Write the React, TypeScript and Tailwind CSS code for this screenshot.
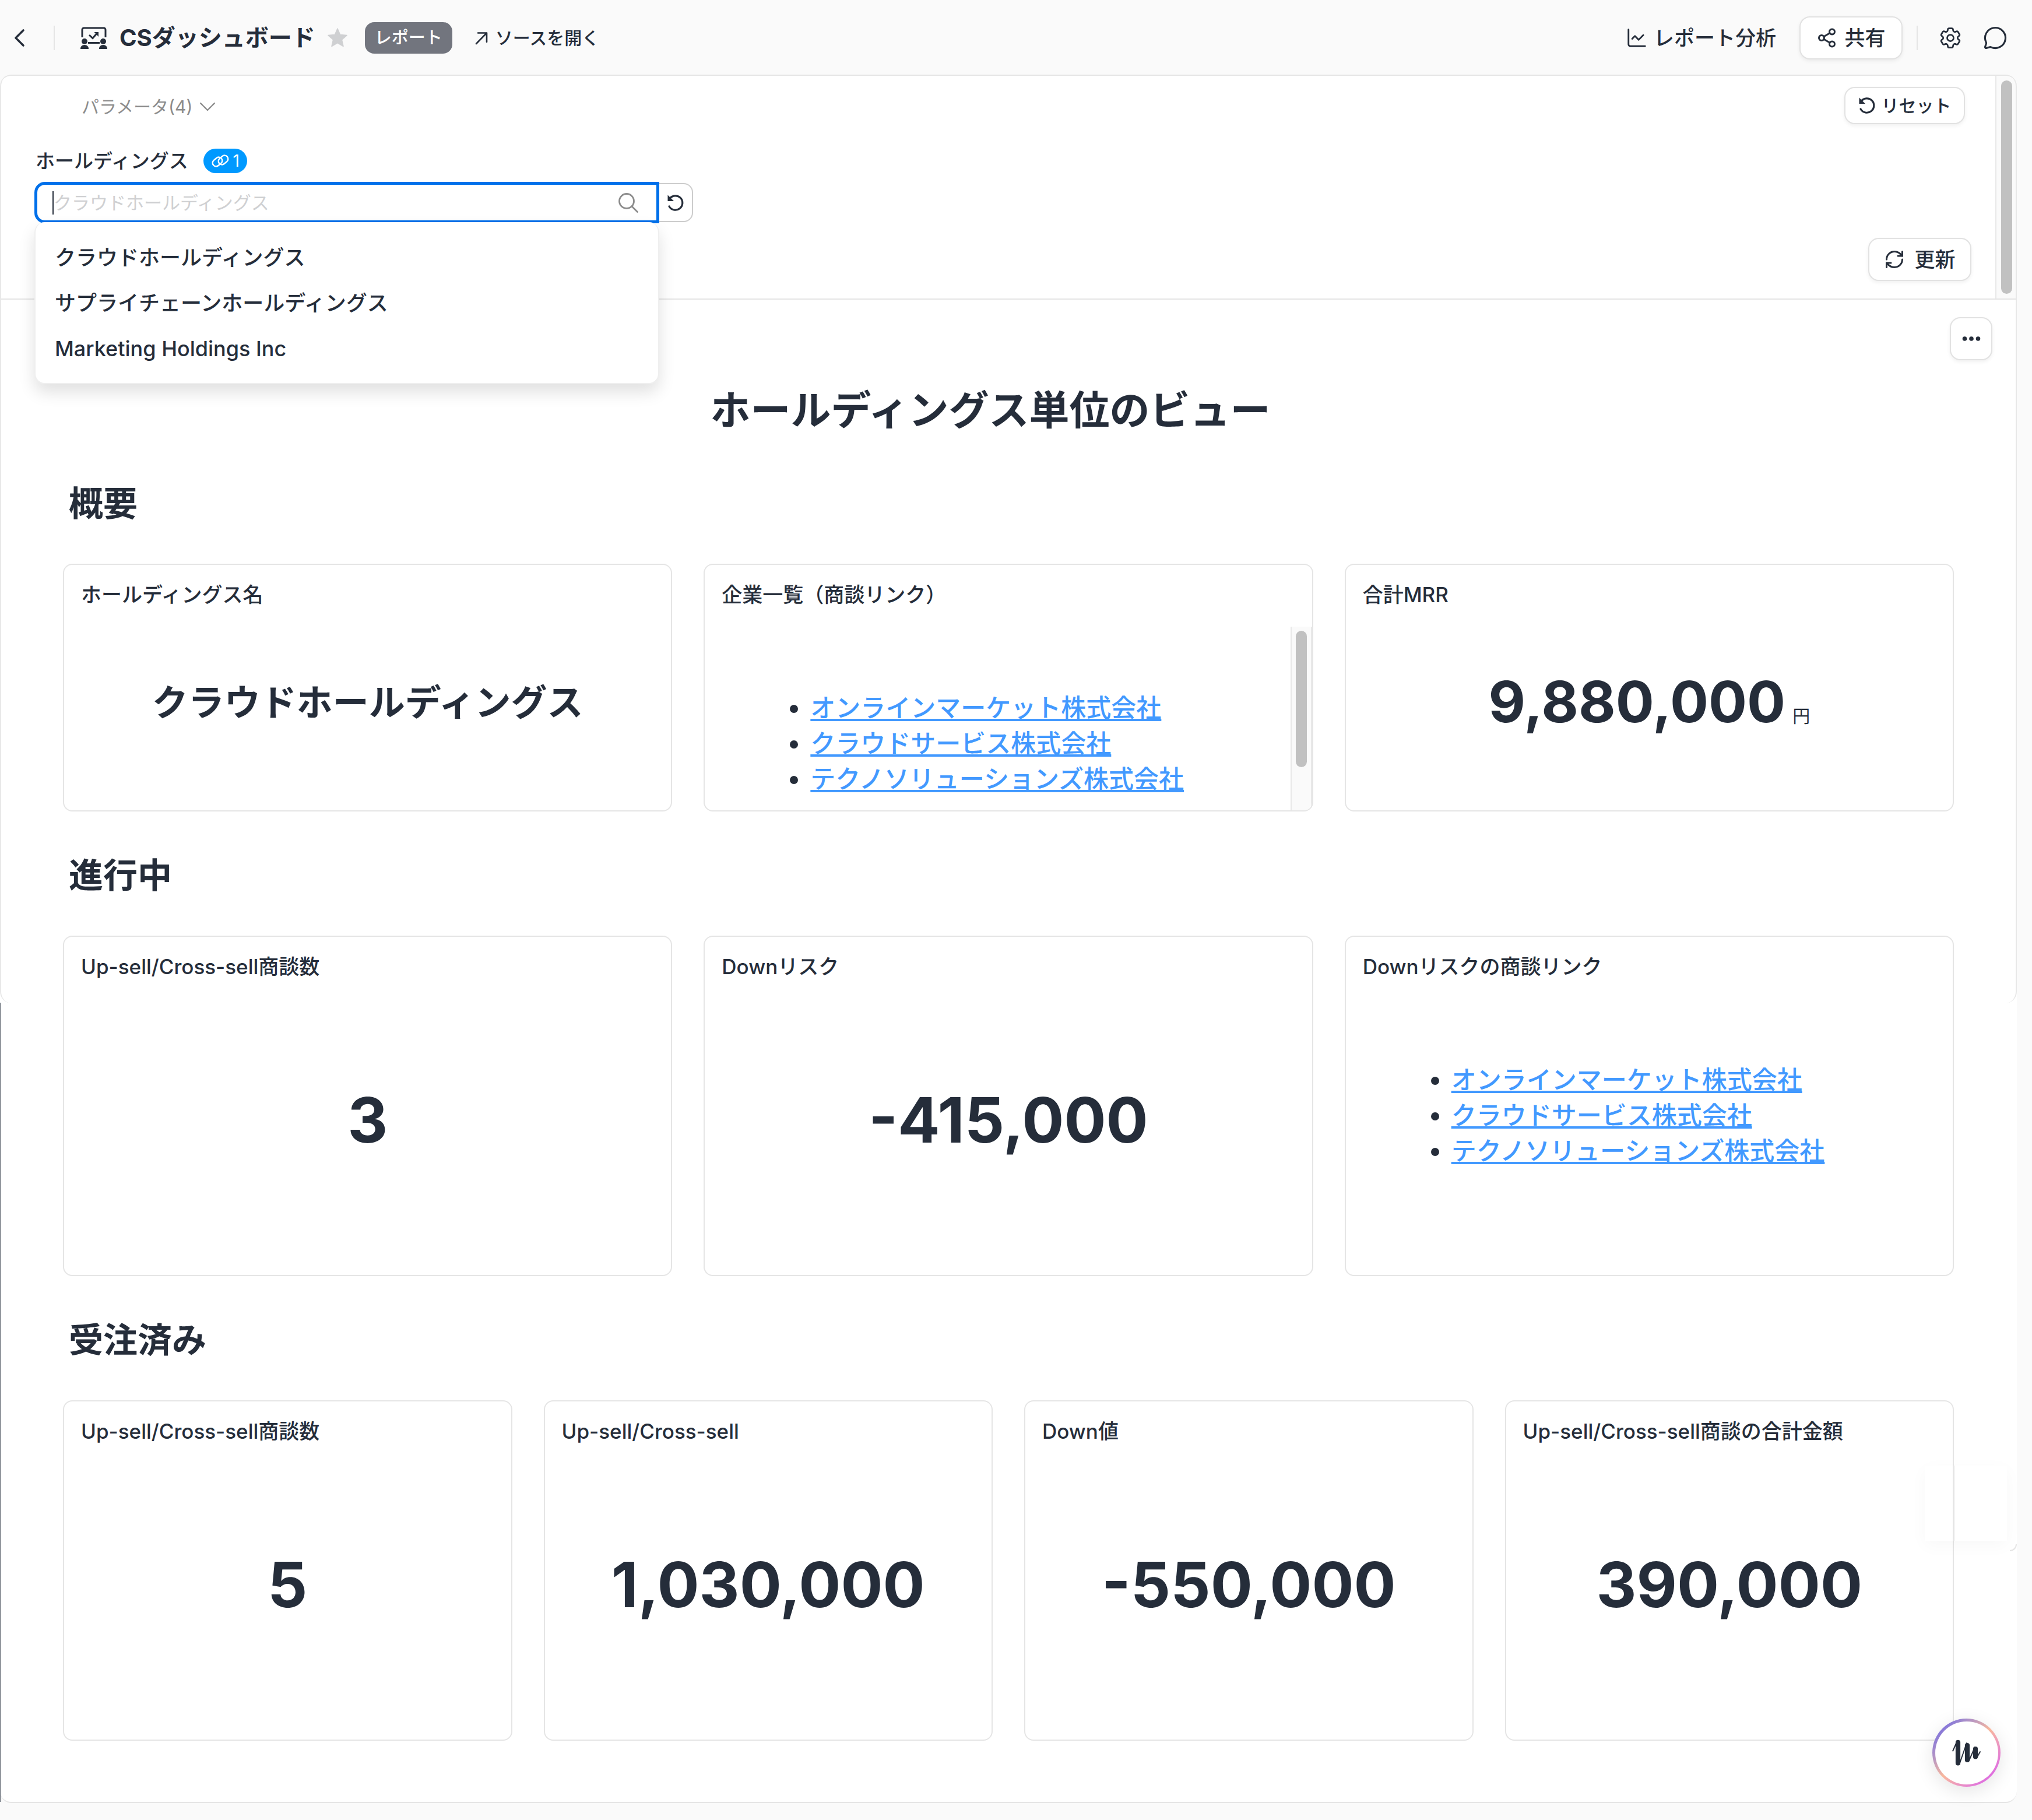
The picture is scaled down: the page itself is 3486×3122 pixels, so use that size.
import React from 'react';
import { ChartLine, MessageCircle, RefreshCw, Share2 } from 'lucide-react';
import { HiOutlineCog6Tooth } from 'react-icons/hi2';

const HOLDINGS = ['クラウドホールディングス', 'サプライチェーンホールディングス', 'Marketing Holdings Inc'];
const COMPANIES = ['オンラインマーケット株式会社', 'クラウドサービス株式会社', 'テクノソリューションズ株式会社'];

const BackIcon = () => (
  <svg viewBox="0 0 32 40" className="w-8 h-10" fill="none" stroke="currentColor" strokeWidth="3.6" strokeLinecap="round" strokeLinejoin="round">
    <path d="M22 7L9 20l13 13" />
  </svg>
);

const BoardIcon = () => (
  <svg viewBox="0 0 48 38" className="w-[48px] h-[38px] shrink-0" fill="none" stroke="currentColor">
    <path d="M4 18V5a3 3 0 0 1 3-3h34a3 3 0 0 1 3 3v13" strokeWidth="3" />
    <path d="M14 27.5h20" strokeWidth="3" />
    <path d="M16 14l6 5.5 7-8" strokeWidth="3" />
    <path d="M24.500 9h7.500v8z" fill="currentColor" stroke="none" />
    <g fill="currentColor" stroke="none">
      <circle cx="8" cy="25" r="5" />
      <circle cx="40" cy="25" r="5" />
      <path d="M1 37.500c0-3.500 2.500-6.500 7-6.500s7 3 7 6.500c0 .8-.5 1-1 1H2c-.5 0-1-.2-1-1z" />
      <path d="M33 37.500c0-3.500 2.500-6.500 7-6.500s7 3 7 6.500c0 .8-.5 1-1 1H34c-.5 0-1-.2-1-1z" />
    </g>
  </svg>
);

const StarIcon = () => (
  <svg viewBox="0 0 36 36" className="w-9 h-9" fill="currentColor" stroke="currentColor" strokeWidth="1.500" strokeLinejoin="round">
    <path d="M18 2l4.600 10.600 11.400 1-8.600 7.600 2.600 11.300L18 26.500 8 32.500l2.600-11.300L2 13.600l11.400-1z" />
  </svg>
);

const OpenIcon = () => (
  <svg viewBox="0 0 24 24" className="w-6 h-6" fill="none" stroke="currentColor" strokeWidth="2.600" strokeLinecap="round" strokeLinejoin="round">
    <path d="M6 3.500h15V19M21 3.500L3 22" />
  </svg>
);

const DownIcon = () => (
  <svg viewBox="0 0 28 18" className="w-7 h-[18px]" fill="none" stroke="currentColor" strokeWidth="2.400" strokeLinecap="round" strokeLinejoin="round">
    <path d="M2 3l12 12L26 3" />
  </svg>
);

const SearchIcon = () => (
  <svg viewBox="0 0 36 36" className="w-9 h-9 text-[#8c8c8c]" fill="none" stroke="currentColor" strokeWidth="2.800" strokeLinecap="round">
    <circle cx="15" cy="15" r="12.500" />
    <path d="M24 24l9.500 9.500" />
  </svg>
);

const ResetIcon = () => (
  <svg viewBox="0 0 30 30" className="w-[30px] h-[30px] shrink-0" fill="none">
    <path d="M5 7.500A12.200 12.200 0 1 1 4 21" stroke="currentColor" strokeWidth="3.200" strokeLinecap="round" />
    <path d="M1.500 1.500v10.500h10.500z" fill="currentColor" />
  </svg>
);

const LinkIcon = () => (
  <svg viewBox="0 0 32 24" className="w-8 h-6" fill="none" stroke="currentColor" strokeWidth="2.400">
    <rect x="2" y="7.500" width="18" height="12" rx="6" transform="rotate(-40 11 13.500)" />
    <rect x="12" y="4.500" width="18" height="12" rx="6" transform="rotate(-40 21 10.500)" />
  </svg>
);

interface PillButtonProps {
  className?: string;
  label?: string;
  children: React.ReactNode;
}

const PillButton: React.FC<PillButtonProps> = ({ className = '', label, children }) => (
  <button
    type="button"
    aria-label={label}
    className={`flex items-center justify-center bg-white border-2 border-[#e2e2e2] rounded-[18px] font-medium whitespace-nowrap shadow-[0_3px_6px_rgba(0,0,0,0.06)] ${className}`}
  >
    {children}
  </button>
);

const Header = () => (
  <header className="flex items-center justify-between h-32 pt-0.5 pl-[18px] pr-[42px]">
    <div className="flex items-center">
      <button type="button" aria-label="戻る">
        <BackIcon />
      </button>
      <span className="w-0.5 h-[42px] bg-[#e5e5e5] ml-[42px] mr-[43px]"></span>
      <BoardIcon />
      <h1 className="text-[40px] leading-[56px] font-bold ml-5">CSダッシュボード</h1>
      <button type="button" aria-label="お気に入り" className="text-[#cfd0d2] ml-5">
        <StarIcon />
      </button>
      <span className="flex items-center justify-center w-[150px] h-[54px] rounded-2xl bg-[#72757e] text-white text-[29px] font-medium ml-[29px]">
        レポート
      </span>
      <a href="#source" className="flex items-center gap-3 text-[30px] font-medium ml-[38px]">
        <OpenIcon />
        ソースを開く
      </a>
    </div>
    <div className="flex items-center">
      <a href="#analysis" className="flex items-center gap-2.5 text-[35px] font-medium mr-10">
        <ChartLine size={38} strokeWidth={1.8} />
        レポート分析
      </a>
      <PillButton className="w-[177px] h-[74px] gap-3 text-[35px]">
        <Share2 size={36} strokeWidth={2} />
        共有
      </PillButton>
      <span className="w-0.5 h-[42px] bg-[#e5e5e5] ml-6 mr-[34px]"></span>
      <button type="button" aria-label="設定">
        <HiOutlineCog6Tooth size={44} />
      </button>
      <button type="button" aria-label="コメント" className="ml-[34px]">
        <MessageCircle size={42} strokeWidth={1.8} />
      </button>
    </div>
  </header>
);

const HoldingSelect = () => (
  <div className="flex items-center">
    <div className="relative w-[1072px]">
      <div className="flex items-center h-[71px] bg-white border-[5px] border-[#0070ea] rounded-l-[18px] pl-[26px] pr-[30px]">
        <span className="w-0.5 h-10 bg-[#252d3a]"></span>
        <input
          id="holding"
          type="text"
          placeholder="クラウドホールディングス"
          className="flex-1 text-[31px] leading-[48px] outline-none placeholder:text-[#cfd0d2]"
        />
        <SearchIcon />
      </div>
      <ul className="absolute left-0 top-[69px] z-10 w-full h-[278px] pt-[22px] bg-white rounded-[18px] border-2 border-t-0 border-[#efefef] shadow-[0_14px_28px_rgba(0,0,0,0.12)]">
        {HOLDINGS.map((name) => (
          <li key={name} className="h-[78px] px-[33px] text-[36px] leading-[78px] font-medium">
            {name}
          </li>
        ))}
      </ul>
    </div>
    <button
      type="button"
      aria-label="パラメータをリセット"
      className="flex items-center justify-center w-[58px] h-[67px] bg-white border-2 border-l-0 border-[#cccccc] rounded-r-2xl"
    >
      <ResetIcon />
    </button>
  </div>
);

const Parameters = () => (
  <section className="flex border-b-2 border-[#e5e5e5]">
    <div className="flex-1 pt-[19px] pb-[30px]">
      <div className="flex items-center justify-between pl-[140px] pr-[52px]">
        <button type="button" className="flex items-center gap-3 pt-1 text-[30px] text-[#8c8c8c]">
          パラメータ(4)
          <DownIcon />
        </button>
        <PillButton className="w-[207px] h-16 gap-2.5 text-[30px]">
          <ResetIcon />
          リセット
        </PillButton>
      </div>
      <div className="pl-[59px] mt-[42px]">
        <div className="flex items-center gap-[26px] pl-0.5 mb-[15px]">
          <label htmlFor="holding" className="text-[33px] leading-[42px] font-medium">
            ホールディングス
          </label>
          <span className="flex items-center justify-center gap-1.5 w-[75px] h-[42px] rounded-full bg-[#0099ff] text-white text-[28px]">
            <LinkIcon />1
          </span>
        </div>
        <HoldingSelect />
      </div>
      <div className="flex justify-end mt-[25px] pr-[41px]">
        <PillButton className="w-[177px] h-[74px] gap-4 text-[35px]">
          <RefreshCw size={36} strokeWidth={2} />
          更新
        </PillButton>
      </div>
    </div>
    <div className="w-[37px] pt-2 pb-2 bg-[#fafafa] border-l-2 border-[#e8e8e8] rounded-tr-[20px]">
      <div className="w-[19px] h-full mx-auto rounded-full bg-[#c1c1c1]"></div>
    </div>
  </section>
);

interface CardProps {
  title: string;
  tall?: boolean;
  children: React.ReactNode;
}

const Card: React.FC<CardProps> = ({ title, tall, children }) => (
  <article
    className={`flex flex-col border-2 border-[#e5e5e5] rounded-2xl bg-white overflow-hidden ${tall ? 'h-[584px]' : 'h-[425px]'}`}
  >
    <h3 className="px-[29px] pt-[25px] h-[106px] shrink-0 text-[35px] leading-[52px] font-medium">{title}</h3>
    {children}
  </article>
);

const Value = ({ value }: { value: string }) => (
  <div className="flex-1 flex items-center justify-center pb-[58px]">
    <p className="text-[107px] leading-[120px] font-bold">{value}</p>
  </div>
);

const CompanyLinks = () => (
  <ul className="list-disc pl-[181px] text-[43px] leading-[61px] font-medium">
    {COMPANIES.map((name) => (
      <li key={name}>
        <a href="#company" className="text-[#4299ff] underline">
          {name}
        </a>
      </li>
    ))}
  </ul>
);

const SectionTitle = ({ children }: { children: React.ReactNode }) => (
  <h2 className="pl-[10px] pt-[66px] pb-[59px] text-[59px] leading-[88px] font-bold">{children}</h2>
);

const AssistantButton = () => (
  <button
    type="button"
    aria-label="アシスタント"
    className="absolute right-[28px] bottom-[26px] flex items-center justify-center w-[117px] h-[117px] rounded-full bg-linear-135 from-[#5f50ea] via-[#f9b79b] to-[#d540f5] shadow-[0_8px_32px_rgba(0,0,0,0.10)]"
  >
    <span className="flex items-center justify-center w-[108px] h-[108px] rounded-full bg-white">
      <svg viewBox="0 0 49 45" className="w-[49px] h-[45px]" fill="none" stroke="currentColor" strokeLinecap="round" strokeLinejoin="round">
        <path d="M1.200 19.500L8 4M12.500 42L25 6M29 36L39 13M42 31.500l6-10.500" strokeWidth="1.900" />
        <path d="M10 4.800v35.700" strokeWidth="8.200" />
        <path d="M26 10v25" strokeWidth="8.200" />
        <path d="M40 16v13.500" strokeWidth="8.200" />
      </svg>
    </span>
  </button>
);

export default function App() {
  return (
    <div
      className="bg-[#fafafa] text-[#252d3a] font-['Inter','Noto_Sans_CJK_JP',sans-serif] [font-variation-settings:'opsz'_14] pb-[29px]"
      lang="ja"
    >
      <Header />
      <main className="relative mr-[26px] bg-white border-y-2 border-[#e5e5e5] rounded-[20px]">
        {/* side edges */}
        <div className="absolute inset-x-0 -top-0.5 h-[1593px] border-x-2 border-[#e8e8e8] rounded-[20px] pointer-events-none"></div>
        <div className="absolute left-0 top-[1590px] bottom-0 w-px bg-[#5b626d]"></div>
        <div className="absolute right-0 top-[2519px] w-3 h-3 border-b-2 border-r-2 border-[#e5e5e5] rounded-br-xl"></div>

        <Parameters />

        <section className="pt-[30px] pb-[105px]">
          <div className="flex justify-end pr-[42px]">
            <PillButton label="メニュー" className="w-[73px] h-[74px]">
              <svg viewBox="0 0 32 8" className="w-8 h-2" fill="currentColor">
                <circle cx="4.500" cy="4" r="3.800" />
                <circle cx="16" cy="4" r="3.800" />
                <circle cx="27.500" cy="4" r="3.800" />
              </svg>
            </PillButton>
          </div>
          <div className="px-[108px]">
            <h1 className="mt-[36px] pr-[62px] text-center text-[69px] leading-[100px] font-bold">ホールディングス単位のビュー</h1>

            <SectionTitle>概要</SectionTitle>
            <div className="grid grid-cols-3 gap-[54px]">
              <Card title="ホールディングス名">
                <div className="flex-1 flex items-center justify-center pb-[54px]">
                  <p className="text-[62px] leading-[88px] font-bold">クラウドホールディングス</p>
                </div>
              </Card>
              <Card title="企業一覧（商談リンク）">
                <div className="flex-1 flex justify-between">
                  <div className="pt-[109px]">
                    <CompanyLinks />
                  </div>
                  <div className="w-[37px] pt-[7px] bg-[#fafafa] border-x-2 border-[#e8e8e8]">
                    <div className="w-[19px] h-[234px] mx-auto rounded-full bg-[#c1c1c1]"></div>
                  </div>
                </div>
              </Card>
              <Card title="合計MRR">
                <div className="flex-1 flex items-baseline justify-center gap-3 pt-[69px]">
                  <p className="text-[98px] leading-[120px] font-bold">9,880,000</p>
                  <span className="text-[30px]">円</span>
                </div>
              </Card>
            </div>

            <SectionTitle>進行中</SectionTitle>
            <div className="grid grid-cols-3 gap-[54px]">
              <Card title="Up-sell/Cross-sell商談数" tall>
                <Value value="3" />
              </Card>
              <Card title="Downリスク" tall>
                <Value value="-415,000" />
              </Card>
              <Card title="Downリスクの商談リンク" tall>
                <div className="pt-[109px]">
                  <CompanyLinks />
                </div>
              </Card>
            </div>

            <SectionTitle>受注済み</SectionTitle>
            <div className="grid grid-cols-4 gap-[54px]">
              <Card title="Up-sell/Cross-sell商談数" tall>
                <Value value="5" />
              </Card>
              <Card title="Up-sell/Cross-sell" tall>
                <Value value="1,030,000" />
              </Card>
              <Card title="Down値" tall>
                <Value value="-550,000" />
              </Card>
              <Card title="Up-sell/Cross-sell商談の合計金額" tall>
                <Value value="390,000" />
              </Card>
            </div>
          </div>
        </section>

        {/* faint floating panel over the last card */}
        <div className="absolute right-[17px] bottom-[448px] w-[141px] h-[129px] shadow-[0_8px_28px_rgba(0,0,0,0.03)] pointer-events-none">
          <div className="ml-[49px] w-0.5 h-full bg-[#e5e5e5]"></div>
        </div>
        <AssistantButton />
      </main>
    </div>
  );
}
